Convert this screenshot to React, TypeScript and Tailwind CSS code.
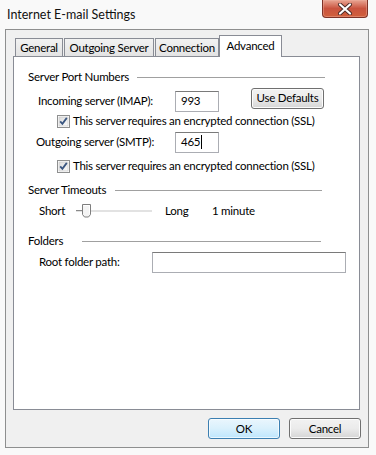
import React from "react";

function CheckBox() {
  return (
    <svg width="13" height="13" viewBox="0 0 13 13" className="shrink-0">
      <defs>
        <linearGradient id="cbg" x1="0" y1="0" x2="1" y2="1">
          <stop offset="0" stopColor="#dcdcdc" />
          <stop offset="1" stopColor="#fbfbfb" />
        </linearGradient>
      </defs>
      <rect x="0.5" y="0.5" width="12" height="12" fill="#fff" stroke="#8e8f8f" />
      <rect x="2" y="2" width="9" height="9" fill="url(#cbg)" stroke="#c4c4c4" strokeWidth="0.6" />
      <path d="M3.2 6.4 L5.4 8.9 L9.8 2.9" fill="none" stroke="#3a5680" strokeWidth="1.8" />
    </svg>
  );
}

function Section({ title, textW, pr, className }: { title: string; textW: string; pr: string; className: string }) {
  return (
    <div className={`flex h-[20px] items-center pl-[14px] ${pr} ${className}`}>
      <span className={`${textW} shrink-0 whitespace-nowrap`}>{title}</span>
      <div className="h-px flex-1 bg-[#a0a0a0]" />
    </div>
  );
}

function Button({ label, w, primary = false, className = "" }: { label: string; w: string; primary?: boolean; className?: string }) {
  return (
    <div
      className={`${w} flex h-[21px] items-center justify-center rounded-[3px] border ${
        primary
          ? "border-[#3c7fb1] bg-gradient-to-b from-[#eaf6fd] via-[#d9f0fc] to-[#bee6fd] shadow-[inset_0_0_0_1px_#ffffffaa]"
          : "border-[#707070] bg-gradient-to-b from-[#f2f2f2] via-[#ebebeb] to-[#d5d5d5] shadow-[inset_0_0_0_1px_#fcfcfc]"
      } ${className}`}
    >
      {label}
    </div>
  );
}

function Tab({ label, w, active = false, className = "" }: { label: string; w: string; active?: boolean; className?: string }) {
  return (
    <div
      className={`${w} flex items-center justify-center whitespace-nowrap border border-b-0 ${
        active
          ? "relative z-10 -mb-px h-[22px] border-[#898c95] bg-white pb-[2px]"
          : "h-[18px] border-[#898c95] bg-gradient-to-b from-[#f2f2f2] to-[#e3e3e3]"
      } ${className}`}
    >
      {label}
    </div>
  );
}

function Slider() {
  return (
    <svg width="76" height="16" viewBox="0 0 76 16" className="shrink-0">
      <rect x="0" y="7" width="76" height="2" fill="#e2e2e2" />
      <rect x="0" y="7" width="7" height="1" fill="#8a8a8a" />
      <path d="M6.5 1.5 h8 v10 l-2 2.5 h-4 l-2 -2.5 z" fill="#f4f4f4" stroke="#7e7e7e" />
      <path d="M7.5 2.5 h6 v8" fill="none" stroke="#fff" />
    </svg>
  );
}

export default function App() {
  return (
    <div className="h-[455px] w-[376px] overflow-hidden bg-[#f9f9f9] font-['Lato',sans-serif] text-[11.5px] tracking-[-0.25px] text-black">
      {/* title bar */}
      <div className="flex h-[29px] items-start justify-between">
        <div className="pl-[7px] pt-[6px] text-[12.5px] tracking-normal text-[#111]">Internet E-mail Settings</div>
        <div className="mr-[8px] flex h-[18px] w-[46px] items-center justify-center rounded-b-[4px] border border-t-0 border-[#7d3227] bg-gradient-to-b from-[#e8a593] via-[#c9533f] to-[#d1603c] shadow-[inset_0_0_0_1px_#f0b0a070]">
          <svg width="16" height="12" viewBox="0 0 16 12">
            <path d="M3 1.5 L13 10.5 M13 1.5 L3 10.5" stroke="#4a2a26" strokeWidth="4" strokeLinecap="round" />
            <path d="M3 1.5 L13 10.5 M13 1.5 L3 10.5" stroke="#ffffff" strokeWidth="2.2" strokeLinecap="round" />
          </svg>
        </div>
      </div>

      {/* client area */}
      <div className="ml-[5px] h-[419px] w-[364px] border border-[#8e8f8f] bg-[#f0f0f0]">
        <div className="flex h-[26px] items-end pl-[9px]">
          <Tab label="General" w="w-[48px]" />
          <Tab label="Outgoing Server" w="w-[90px]" className="ml-px" />
          <Tab label="Connection" w="w-[64px]" className="ml-px" />
          <Tab label="Advanced" w="w-[63px]" active />
        </div>

        <div className="ml-[7px] h-[354px] w-[347px] border border-[#898c95] bg-white pt-[10px]">
          <Section title="Server Port Numbers" textW="w-[109px]" pr="pr-[34px]" className="" />

          <div className="mt-[4px] flex h-[20px] items-center pl-[24px]">
            <span className="w-[137px] shrink-0">Incoming server (IMAP):</span>
            <div className="flex h-[21px] w-[44px] items-center border border-[#abadb3] border-t-[#7a7a7a] bg-white pl-[5px]">993</div>
            <Button label="Use Defaults" w="w-[73px]" className="mb-[6px] ml-[32px] h-[20px]" />
          </div>

          <div className="flex h-[20px] items-center gap-[3px] pl-[43px]">
            <CheckBox />
            <span>This server requires an encrypted connection (SSL)</span>
          </div>

          <div className="mt-[1px] flex h-[20px] items-center pl-[22px]">
            <span className="w-[139px] shrink-0">Outgoing server (SMTP):</span>
            <div className="flex h-[21px] w-[44px] items-center border border-[#abadb3] border-t-[#7a7a7a] bg-white pl-[5px]">
              465<span className="ml-px h-[14px] w-px bg-black" />
            </div>
          </div>

          <div className="mt-[4px] flex h-[20px] items-center gap-[3px] pl-[43px]">
            <CheckBox />
            <span>This server requires an encrypted connection (SSL)</span>
          </div>

          <Section title="Server Timeouts" textW="w-[87px]" pr="pr-[37px]" className="mt-[4px]" />

          <div className="mt-[1px] flex h-[20px] items-center pl-[25px]">
            <span className="w-[37px] shrink-0">Short</span>
            <Slider />
            <span className="ml-[13px] w-[47px] shrink-0">Long</span>
            <span>1 minute</span>
          </div>

          <Section title="Folders" textW="w-[54px]" pr="pr-[38px]" className="mt-[10px]" />

          <div className="mt-[1px] flex h-[20px] items-center pl-[25px]">
            <span className="w-[113px] shrink-0">Root folder path:</span>
            <div className="h-[21px] w-[194px] border border-[#abadb3] border-t-[#7a7a7a] bg-white" />
          </div>
        </div>

        <div className="mt-[8px] flex justify-end pr-[7px]">
          <Button label="OK" w="w-[72px]" primary />
          <Button label="Cancel" w="w-[72px]" className="ml-[9px]" />
        </div>
      </div>
    </div>
  );
}
